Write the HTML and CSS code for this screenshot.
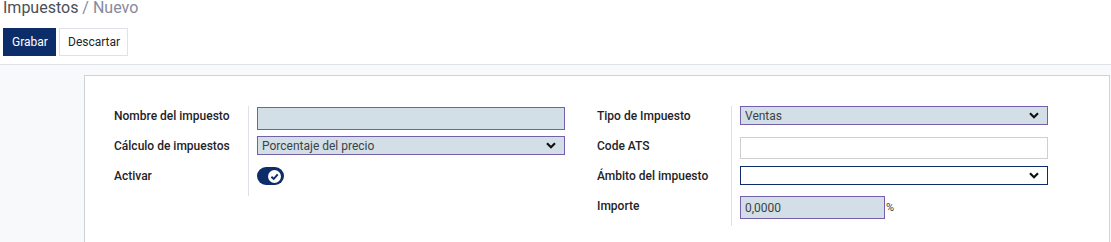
FILE: index.html
```html
<!DOCTYPE html>
<html lang="es">
<head>
    <meta charset="UTF-8">
    <title>Impuestos / Nuevo</title>
    <link rel="stylesheet" href="styles.css">
</head>
<body>

    <!-- Control panel -->
    <div class="control-panel">
        <div class="breadcrumb">Impuestos <span class="current">/ Nuevo</span></div>
        <div class="buttons">
            <button class="btn btn-primary">Grabar</button>
            <button class="btn btn-secondary">Descartar</button>
        </div>
    </div>

    <div class="content">
        <div class="sheet">
            <div class="group">
                <div class="col">
                    <div class="label">Nombre del impuesto</div>
                    <div class="field"><div class="input required tall"></div></div>

                    <div class="label">Cálculo de impuestos</div>
                    <div class="field">
                        <div class="input required select">
                            <span>Porcentaje del precio</span>
                            <svg class="caret" viewBox="0 0 10 7"><path d="M1 1.2 L5 5.2 L9 1.2" /></svg>
                        </div>
                    </div>

                    <div class="label">Activar</div>
                    <div class="field">
                        <div class="toggle">
                            <span class="knob">
                                <svg viewBox="0 0 10 10"><path d="M2.6 5.2 L4.4 6.9 L7.5 3.4" /></svg>
                            </span>
                        </div>
                    </div>
                </div>

                <div class="col">
                    <div class="label">Tipo de Impuesto</div>
                    <div class="field">
                        <div class="input required select">
                            <span>Ventas</span>
                            <svg class="caret" viewBox="0 0 10 7"><path d="M1 1.2 L5 5.2 L9 1.2" /></svg>
                        </div>
                    </div>

                    <div class="label">Code ATS</div>
                    <div class="field"><div class="input plain tall"></div></div>

                    <div class="label">Ámbito del impuesto</div>
                    <div class="field">
                        <div class="input focus select">
                            <span></span>
                            <svg class="caret" viewBox="0 0 10 7"><path d="M1 1.2 L5 5.2 L9 1.2" /></svg>
                        </div>
                    </div>

                    <div class="label">Importe</div>
                    <div class="field">
                        <div class="input required tall short"><span>0,0000</span></div>
                        <span class="unit">%</span>
                    </div>
                </div>
            </div>
        </div>
    </div>

</body>
</html>
```

FILE: styles.css
```css
body {
    margin: 0;
    font-family: Roboto, "Liberation Sans", sans-serif;
    font-size: 12px;
    color: #212529;
    background-color: #fff;
    height: 242px;
    overflow: hidden;
}

/* Control panel */
.control-panel {
    height: 65px;
    padding: 0 3px;
    border-bottom: 1px solid #dee2e6;
    box-sizing: border-box;
    background-color: #fff;
}

.breadcrumb {
    font-size: 16px;
    line-height: 16px;
    color: #4a4f59;
}

.breadcrumb .current {
    color: #868a9c;
}

.buttons {
    display: flex;
    gap: 3px;
    margin-top: 12px;
}

.btn {
    font-family: inherit;
    font-size: 12px;
    height: 28px;
    padding: 0 8px;
    border-radius: 0;
    cursor: pointer;
}

.btn-primary {
    width: 53px;
    background-color: #0d2c6a;
    color: #fff;
    border: 1px solid #0d2c6a;
}

.btn-secondary {
    width: 69px;
    background-color: #fff;
    color: #212529;
    border: 1px solid #dee2e6;
}

/* Form sheet */
.content {
    background-color: #f8f9fa;
    padding: 10px 1px 0 84px;
    height: 177px;
}

.sheet {
    background-color: #fff;
    border: 1px solid #cfd2d8;
    border-bottom: none;
    height: 100%;
    box-sizing: border-box;
    padding: 30px 0 0 29px;
}

.group {
    display: grid;
    grid-template-columns: 451px 450px;
    column-gap: 32px;
}

.col {
    display: grid;
    grid-template-columns: 134px 1fr;
    grid-auto-rows: 30px;
}

.label {
    font-weight: 500;
    line-height: 19px;
    padding-top: 1px;
    color: #1f2328;
}

.field {
    border-left: 1px solid #dee2e6;
    padding-left: 8px;
    display: flex;
    align-items: flex-start;
}

.input {
    width: 308px;
    height: 19px;
    box-sizing: border-box;
    display: flex;
    align-items: center;
    justify-content: space-between;
    padding: 0 8px 0 4px;
    color: #3e4147;
    font-size: 12px;
}

.input.tall {
    height: 23px;
    margin-top: 1px;
}

.input.required {
    background-color: #d2dfe6;
    border: 1px solid #7460a8;
}

.input.plain {
    background-color: #fff;
    border: 1px solid #cfcfcf;
    height: 22px;
}

.input.focus {
    background-color: #fff;
    border: 1px solid #0d2c6a;
}

.input.short {
    width: 145px;
    margin-top: 0;
    height: 23px;
}

.caret {
    width: 10px;
    height: 7px;
    fill: none;
    stroke: #111;
    stroke-width: 2.2;
}

.unit {
    font-size: 11px;
    margin: 5px 0 0 1px;
    color: #333;
}

/* Toggle switch */
.toggle {
    width: 27px;
    height: 18px;
    margin-top: 1px;
    border-radius: 9px;
    background-color: #0d2c6a;
    display: flex;
    align-items: center;
    justify-content: flex-end;
    padding-right: 3px;
    box-sizing: border-box;
}

.knob {
    width: 13px;
    height: 13px;
    border-radius: 50%;
    background-color: #fff;
    display: flex;
}

.knob svg {
    width: 13px;
    height: 13px;
    fill: none;
    stroke: #0d2c6a;
    stroke-width: 1.5;
}
```
